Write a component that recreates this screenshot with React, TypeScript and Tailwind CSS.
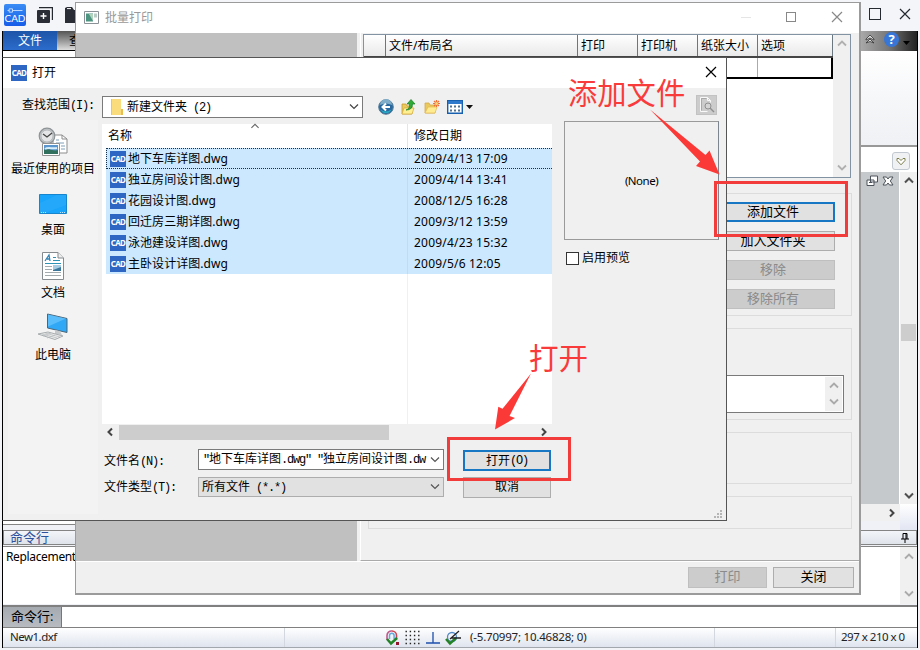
import type { ReactNode } from 'react';
import clsx from 'clsx';

const files = [
    { name: '地下车库详图.dwg', date: '2009/4/13 17:09' },
    { name: '独立房间设计图.dwg', date: '2009/4/14 13:41' },
    { name: '花园设计图.dwg', date: '2008/12/5 16:28' },
    { name: '回迁房三期详图.dwg', date: '2009/3/12 13:59' },
    { name: '泳池建设详图.dwg', date: '2009/4/23 15:32' },
    { name: '主卧设计详图.dwg', date: '2009/5/6 12:05' },
];

interface ChevronProps {
    dir: 'up' | 'down' | 'left' | 'right';
    className?: string;
    width?: number;
}

const chevronPaths = {
    up: 'M1 6.5 5 2.5 9 6.5',
    down: 'M1 2.5 5 6.5 9 2.5',
    left: 'M7 1.5 3.5 5 7 8.5',
    right: 'M3 1.5 6.5 5 3 8.5',
};

function Chevron({ dir, className, width = 1.2 }: ChevronProps) {
    return (
        <svg viewBox="0 0 10 10" className={clsx('size-[10px] shrink-0', className)} fill="none" stroke="currentColor" strokeWidth={width}>
            <path d={chevronPaths[dir]} />
        </svg>
    );
}

// Half-width latin, two characters per CJK cell
function Mono({ children }: { children: ReactNode }) {
    return <span className="font-['Liberation_Mono',monospace] tracking-[-1.2px] whitespace-pre">{children}</span>;
}

function CadIcon() {
    return (
        <span className="flex h-4 w-4 shrink-0 items-center justify-center bg-[#2e66c4] text-[8px] leading-none font-bold tracking-[-0.6px] text-white">
            CAD
        </span>
    );
}

function CloseIcon({ className }: { className?: string }) {
    return (
        <svg viewBox="0 0 12 12" className={clsx('size-3 shrink-0', className)} fill="none" stroke="currentColor" strokeWidth="1.2">
            <path d="M1 1 11 11M11 1 1 11" />
        </svg>
    );
}

function MainTitleBar() {
    return (
        <div className="flex h-[31px] shrink-0 items-start bg-[#f3f5f8]">
            <div className="mt-1 ml-1 flex h-[22px] w-[22px] flex-col items-center justify-end rounded-[2px] bg-gradient-to-b from-[#3a8cf5] to-[#175ce8] pb-[3px] text-white">
                <svg viewBox="0 0 20 6" className="h-[5px] w-5" fill="none" stroke="#d5e8ff">
                    <path d="M1 3h2M7 3h12M3 1h4v4H3z" />
                </svg>
                <span className="font-['Lato',sans-serif] text-[10px] leading-[10px] tracking-[-0.1px]">CAD</span>
            </div>
            <svg viewBox="0 0 17 17" className="mt-[7px] ml-[10px] size-[17px]">
                <path d="M3 .6h13.4V13" fill="none" stroke="#25282e" strokeWidth="1.2" />
                <rect x="1" y="3" width="13" height="13" rx="1" fill="#2a2d35" />
                <path d="M7.5 6v6M4.5 9h6" stroke="#fff" strokeWidth="1.4" />
            </svg>
            <svg viewBox="0 0 16 17" className="mt-[6px] ml-3 h-[17px] w-4">
                <path d="M0 2 2 1h5l2 3h7v13H0z" fill="#2a2d35" />
                <path d="M2 2.6h4" stroke="#fff" />
            </svg>
            <div className="mt-2 ml-auto flex items-center gap-[18px] pr-[9px] text-[#252a31]">
                <span className="h-3 w-3 border-[1.5px] border-current" />
                <CloseIcon />
            </div>
        </div>
    );
}

function Ribbon() {
    return (
        <>
            <div className="flex h-[20px] shrink-0 bg-gradient-to-b from-[#1c1c1c] to-black">
                <div className="flex h-[19px] w-[54px] items-center justify-center bg-gradient-to-b from-[#1d55a8] to-[#2c6ccc] text-white">文件</div>
                <div className="flex h-[19px] w-10 items-center bg-gradient-to-b from-[#555] to-[#ddd] pl-3 text-black">查看</div>
                <div className="ml-auto flex w-[57px] items-center bg-gradient-to-r from-[#aaa] via-[#777] to-[#222] pl-[5px]">
                    <svg viewBox="0 0 10 10" className="mb-1 size-[10px]" fill="#ddd" stroke="#333" strokeWidth=".8">
                        <path d="M1 5 5 1 9 5V6L5 4 1 6zM1 9 5 5 9 9 5 7.500z" />
                    </svg>
                    <span className="mb-[3px] ml-[9px] flex size-[15px] items-center justify-center rounded-full bg-[#3776d6] text-[13px] leading-none font-bold text-white">
                        ?
                    </span>
                    <svg viewBox="0 0 7 4" className="mt-1 ml-[4px] h-1 w-[7px]">
                        <path d="M0 0h7L3.5 4z" fill="#000" />
                    </svg>
                </div>
            </div>
            <div className="h-[96px] shrink-0 border-b-2 border-[#989898] bg-gradient-to-b from-white via-[#f6f7f9] to-[#eff1f4]" />
            <div className="flex h-[25px] shrink-0 items-start justify-end bg-white pt-[5px] pr-[7px]">
                <span className="flex h-[18px] w-[18px] items-center justify-center rounded-[3px] border border-[#c2c8d0] bg-[#f0f1f3]">
                    <svg viewBox="0 0 10 9" className="h-[9px] w-[10px]" fill="#fff" stroke="#7b7c48">
                        <path d="M1 3.5V1.5h2l2 2 2-2h2v2L5 7.8z" />
                    </svg>
                </span>
            </div>
        </>
    );
}

function Canvas() {
    return (
        <div className="flex h-[358px] shrink-0">
            <div className="mb-[5px] grow border-b border-[#848484] bg-white" />
            <div className="flex w-10 flex-col">
                <div className="flex h-[332px] items-start gap-[4px] border-r border-white bg-[#c5c9cc] pt-[3px] pl-[6px]">
                    <svg viewBox="0 0 12 12" className="size-3" fill="#fff" stroke="#4c535a">
                        <path d="M4.5 1h7v6h-7zM1 5h7v5.5H1z" />
                        <path d="M3 7.5h3" />
                    </svg>
                    <svg viewBox="0 0 12 12" className="size-3" fill="#fff" stroke="#4c535a">
                        <path d="M1 2h3.5L6 4l1.500-2H11L8.300 6 11 10H7.500L6 8l-1.500 2H1L3.700 6z" />
                    </svg>
                </div>
                <div className="flex h-[17px] items-center justify-end bg-[#f0f0f0] pr-[3px] text-[#444]">
                    <Chevron dir="right" width={2} />
                </div>
            </div>
            <div className="flex w-[17px] flex-col items-center bg-[#f0f0f0] pt-[4px] text-[#505050]">
                <Chevron dir="up" width={2} />
                <div className="mt-[138px] h-[17px] w-[15px] shrink-0 bg-[#cdcdcd]" />
                <Chevron dir="down" width={2} className="mt-[150px]" />
                <div className="mt-auto h-[26px] w-full bg-gradient-to-b from-white to-[#e2e5f3]" />
            </div>
        </div>
    );
}

function CommandPane() {
    return (
        <>
            <div className="flex h-[15px] shrink-0 items-center justify-between border border-[#848484] bg-gradient-to-b from-[#f3f5f9] to-[#dfe3ea] pr-[7px] pl-[6px] text-[13px] leading-none text-[#2c519d]">
                命令行
                <svg viewBox="0 0 8 10" className="h-[10px] w-2" fill="none" stroke="#000">
                    <path d="M2 6V.5h4V6M0 6h8M4 6v4M5 1v5" />
                </svg>
            </div>
            <div className="mt-[1px] flex h-[58px] shrink-0 justify-between border-t border-[#848484] bg-white">
                <span className="pt-[2px] pl-[3px] text-[12px] leading-4 tracking-[-0.35px] text-black">Replacement</span>
                <div className="flex w-[17px] flex-col items-center justify-between bg-[#f0f0f0] py-[5px] text-[#aaa]">
                    <Chevron dir="up" width={1.8} />
                    <Chevron dir="down" width={1.8} />
                </div>
            </div>
            <div className="mt-[1px] flex h-[23px] shrink-0 border-t-2 border-b border-[#808080] bg-white">
                <div className="flex w-[59px] items-center border-r border-[#777] bg-gradient-to-b from-[#a5aab1] to-[#b8bcc1] pl-2 text-[13px] text-black">
                    命令行:
                </div>
            </div>
        </>
    );
}

function StatusBar() {
    return (
        <div className="flex h-[20px] shrink-0 items-center border-b border-[#a2a6ad] bg-gradient-to-b from-white to-[#dfe4ee] text-[11.5px] leading-none text-[#222]">
            <span className="flex h-full w-[282px] items-center border-r border-[#d3d7df] pb-px pl-[7px] tracking-[-0.5px]">New1.dxf</span>
            <div className="flex h-full w-[430px] items-center border-r border-[#d3d7df] pl-[100px]">
                <svg viewBox="0 0 15 16" className="h-4 w-[15px]" fill="none">
                    <path d="M2 10V5.500a4.500 4.500 0 0 1 5-4.500" stroke="#c05a8a" strokeWidth="1.600" />
                    <path d="M7 1a4.500 4.500 0 0 1 4.500 4.500V9" stroke="#d2454f" strokeWidth="1.600" />
                    <path d="M4.500 9V5.500a2.300 2.300 0 0 1 4.600 0V9" stroke="#65a9dc" strokeWidth="1.500" />
                    <path d="m2 9 4 4.500L12 8" stroke="#218326" strokeWidth="2.500" />
                    <path d="M11 12h3v3h-3z" fill="#921629" />
                </svg>
                <svg viewBox="0 0 15 15" className="ml-[5px] size-[15px]" stroke="#222" strokeWidth="1.4" strokeDasharray="1.4 2.8">
                    <path d="M.5 1.500h14.500M.5 5.500h14.500M.5 9.500h14.500M.5 13.500h14.500" />
                </svg>
                <svg viewBox="0 0 14 14" className="ml-[6px] size-[14px]" stroke="#1d4fac" strokeWidth="1.3">
                    <path d="M7 1v11M0 12h14" />
                </svg>
                <svg viewBox="0 0 16 16" className="ml-[5px] size-4" fill="none">
                    <circle cx="7" cy="7" r="4.500" stroke="#5188c6" strokeWidth="1.300" />
                    <path d="m1 9 4 4.500 6-5.500" stroke="#248225" strokeWidth="2.500" />
                    <path d="M5 9 14 1M6 8h10" stroke="#222" strokeWidth="1.300" />
                </svg>
                <span className="ml-[9px] pb-px tracking-[-0.2px] whitespace-nowrap">(-5.70997; 10.46828; 0)</span>
            </div>
            <span className="flex h-full w-[121px] border-r border-[#d3d7df]" />
            <span className="pb-px pl-[5px] tracking-[-0.5px] whitespace-nowrap">297 x 210 x 0</span>
        </div>
    );
}

function MainWindow() {
    return (
        <div className="flex h-[650px] w-[920px] flex-col">
            <MainTitleBar />
            <div className="mr-[2px] ml-[2px] flex h-[617px] shrink-0 flex-col border-r border-l border-black bg-[#eff1f6]">
                <Ribbon />
                <Canvas />
                <CommandPane />
                <StatusBar />
            </div>
        </div>
    );
}

interface DialogButtonProps {
    children: ReactNode;
    className?: string;
    disabled?: boolean;
    focused?: boolean;
}

function DialogButton({ children, className, disabled, focused }: DialogButtonProps) {
    return (
        <button
            type="button"
            disabled={disabled}
            className={clsx(
                'flex shrink-0 items-center justify-center leading-none',
                disabled && 'border border-[#bfbfbf] bg-[#cccccc] text-[#8a8a8a]',
                focused && 'border-2 border-[#1877c5] bg-[#e1e1e1] text-black',
                !disabled && !focused && 'border border-[#adadad] bg-[#e1e1e1] text-black',
                className,
            )}
        >
            {children}
        </button>
    );
}

function FileTable() {
    return (
        <div className="flex h-[144px] w-[488px] border border-[#8294a4] bg-white">
            <div className="flex w-[469px] flex-col">
                <div className="flex h-[23px] border-b-2 border-[#444] bg-gradient-to-b from-white to-[#e9e9e9] text-[12px] text-black">
                    <span className="w-[22px] border-r border-[#6a7680]" />
                    <span className="flex w-[192px] items-center border-r border-[#6a7680] pl-[3px]">文件/布局名</span>
                    <span className="flex w-[60px] items-center border-r border-[#6a7680] pl-[3px]">打印</span>
                    <span className="flex w-[60px] items-center border-r border-[#6a7680] pl-[3px]">打印机</span>
                    <span className="flex w-[60px] items-center border-r border-[#6a7680] pl-[3px]">纸张大小</span>
                    <span className="flex grow items-center border-r border-[#6a7680] pl-[3px]">选项</span>
                </div>
                <div className="flex h-[21px] border-2 border-t-0 border-black">
                    <span className="w-[392px] border-r border-[#aaa]" />
                </div>
            </div>
            <div className="flex grow flex-col items-center justify-between bg-[#f0f0f0] pt-1 pb-1 text-[#b0b0b0]">
                <Chevron dir="up" width={1.8} />
                <Chevron dir="down" width={1.8} />
            </div>
        </div>
    );
}

function PrintDialog() {
    return (
        <div className="absolute top-[2px] left-[75px] flex h-[593px] w-[786px] flex-col border border-r-2 border-b-2 border-[#9b9b9b] bg-[#f0f0f0]">
            <div className="flex h-[30px] shrink-0 items-center bg-white pr-[16px] pl-2 text-[#999]">
                <svg viewBox="0 0 15 13" className="mb-[2px] h-[13px] w-[15px]">
                    <path d="M.5.5h14v12H.500z" fill="#fff" stroke="#8a9298" />
                    <path d="M2 2.500h7v8H2z" fill="#4c9380" />
                    <path d="M10 2.500h3v4h-3z" fill="#b9cbc5" />
                    <path d="M5 3h4v7z" fill="#b1d5bc" />
                </svg>
                <span className="ml-[6px] text-[12px]">批量打印</span>
                <div className="mb-[2px] ml-auto flex items-center">
                    <span className="h-px w-[10px] bg-[#e5e5e5]" />
                    <span className="ml-[35px] h-[10px] w-[10px] border border-[#888]" />
                    <CloseIcon className="ml-[35px] text-[#888]" />
                </div>
            </div>
            <div className="flex h-[528px] shrink-0">
                <div className="w-[281px] shrink-0 bg-[#c0c0c0]" />
                <div className="ml-[3px] flex grow flex-col border-b border-l border-b-[#aaa] border-l-white pt-px pl-[2px]">
                    <FileTable />
                    <div className="mt-[15px] ml-[5px] flex h-[123px] w-[484px] flex-col items-end gap-[9px] border border-[#dcdcdc] pt-[8px] pr-[16px] text-[13px]">
                        <DialogButton focused className="h-[20px] w-[124px] pb-[2px]">添加文件</DialogButton>
                        <DialogButton className="h-[20px] w-[124px] pb-[2px]">加入文件夹</DialogButton>
                        <DialogButton disabled className="h-[20px] w-[124px] pb-[2px]">移除</DialogButton>
                        <DialogButton disabled className="h-[20px] w-[124px] pb-[2px]">移除所有</DialogButton>
                    </div>
                    <div className="mt-[12px] ml-[5px] flex h-[92px] w-[484px] justify-end border border-[#dcdcdc] pt-[46px] pr-[7px]">
                        <div className="flex h-[38px] w-[300px] justify-end border border-[#7a7a7a] bg-white">
                            <div className="my-px mr-px flex w-[17px] flex-col items-center justify-between bg-[#f0f0f0] py-1 text-[#aaa]">
                                <Chevron dir="up" width={1.8} />
                                <Chevron dir="down" width={1.8} />
                            </div>
                        </div>
                    </div>
                    <div className="mt-[12px] ml-[5px] h-[52px] w-[484px] border border-[#dcdcdc]" />
                    <div className="mt-[12px] ml-[5px] h-[33px] w-[484px] border border-[#dcdcdc]" />
                </div>
            </div>
            <div className="flex grow justify-end gap-[6px] border-t border-white pt-[5px] pr-[5px] text-[13px]">
                <DialogButton disabled className="h-[21px] w-[79px] pb-[2px]">打印</DialogButton>
                <DialogButton className="h-[21px] w-[81px] pb-[2px]">关闭</DialogButton>
            </div>
        </div>
    );
}

function RecentIcon() {
    return (
        <svg viewBox="0 0 30 30" className="h-[30px] w-[30px]">
            <path d="M15 8h9l5 4v14H15z" fill="#fff" stroke="#8d8d8d" />
            <path d="M24 8v4h5" fill="none" stroke="#8d8d8d" />
            <path d="M18 13h3M18 16h8M23 19h4M23 22h4" stroke="#7fa0b8" />
            <circle cx="9" cy="9" r="7.800" fill="#c3c6c8" stroke="#8d9396" strokeWidth="1.200" />
            <circle cx="9" cy="9" r="6" fill="#e3e5e6" stroke="#a5abae" strokeWidth=".7" />
            <path d="m5 7 4 3 5-4" fill="none" stroke="#444" strokeWidth="1.300" />
            <path d="M4.500 16.500h17v12h-17z" fill="#fff" stroke="#929292" />
            <path d="M6 18h14v9H6z" fill="#5b96cf" />
            <path d="M6 23c4-3 9 2 14 0v4H6z" fill="#32705e" />
            <path d="M7 22c3-2 7 0 12-1" stroke="#d8eef8" strokeWidth="2" fill="none" />
        </svg>
    );
}

function DesktopIcon() {
    return (
        <svg viewBox="0 0 28 20" className="mb-1 h-5 w-7">
            <path d="M.5.5h27v19H.500z" fill="#18a4fa" stroke="#1685ce" />
            <path d="M18 1h9v10L6 19H1V9z" fill="#46b6fb" opacity=".25" />
            <path d="M2 18.500h5M21 18.500h5" stroke="#b8e8ff" strokeDasharray="1 1" />
        </svg>
    );
}

function DocumentsIcon() {
    return (
        <svg viewBox="0 0 22 28" className="mb-px h-7 w-[22px]">
            <path d="M.5.5H16L21.500 6v21.500H.500z" fill="#fff" stroke="#858b8e" />
            <path d="M16 .5V6h5.500" fill="#eee" stroke="#858b8e" />
            <path d="m3 9 4-6 1 6M5 7h3" fill="none" stroke="#3184b6" strokeWidth="1.300" />
            <path d="M11 5.500h3M11 8.500h7M3 11.500h16" stroke="#2d93b6" />
            <path d="M3 14.500h7M3 17.500h7M3 20.500h16M3 23.500h16" stroke="#a3abae" />
            <path d="M11 13h8v6h-8z" fill="#397699" />
            <path d="M11 13h8v2l-8 3z" fill="#a5cce3" />
        </svg>
    );
}

function ComputerIcon() {
    return (
        <svg viewBox="0 0 32 28" className="mb-[2px] h-7 w-8">
            <path d="M10.500 1 30 5.500v14L10.500 15z" fill="#31a8f5" stroke="#4b6678" />
            <path d="m11 1.500 18 4-18 8z" fill="#75cbff" opacity=".6" />
            <path d="m18 17 5 1 2 4-7-1z" fill="#c6c9cb" />
            <path d="m1 21 10-2 15 4-8 3.500z" fill="#eee" stroke="#a8acae" />
            <path d="m5 21 15 4M8 20l15 4M6 23l8-3M10 25l8-3" stroke="#b5b9bb" strokeWidth=".7" />
        </svg>
    );
}

const places = [
    { label: '最近使用的项目', icon: <RecentIcon />, box: 'h-[59px]' },
    { label: '桌面', icon: <DesktopIcon />, box: 'h-[61px]' },
    { label: '文档', icon: <DocumentsIcon />, box: 'h-[63px]' },
    { label: '此电脑', icon: <ComputerIcon />, box: 'h-[62px]' },
];

function Toolbar() {
    return (
        <div className="flex h-[36px] items-center">
            <span className="w-[99px] pb-px pl-[19px]">
                查找范围<Mono>(I):</Mono>
            </span>
            <div className="mt-[2px] flex h-[22px] w-[261px] items-center border border-[#7a7a7a] bg-white pr-[3px] pl-[7px]">
                <svg viewBox="0 0 14 16" className="h-4 w-[14px]">
                    <path d="M1 0h10v10l2 1v5H1z" fill="#fbdc7c" />
                    <path d="M11 10h2v6h-2z" fill="#e8bd52" />
                    <path d="M1 0h1v16H1z" fill="#edc65f" />
                </svg>
                <span className="ml-[3px]">
                    新建文件夹<Mono> (2)</Mono>
                </span>
                <Chevron dir="down" className="ml-auto text-[#444]" />
            </div>
            <div className="mt-[2px] ml-[15px] flex items-center">
                <svg viewBox="0 0 16 16" className="size-4">
                    <circle cx="8" cy="8" r="7.300" fill="#2868a1" stroke="#597e97" />
                    <path d="M2 6a6 6 0 0 1 12 0q-6-3-12 0" fill="#80aeca" />
                    <path d="M2.500 10.500q5 4 11 0A6 6 0 0 1 2.500 10.500" fill="#28a8c2" />
                    <path d="M12 8H4.500M8 4.500 4.500 8 8 11.500" fill="none" stroke="#fff" strokeWidth="2" />
                </svg>
                <svg viewBox="0 0 16 16" className="ml-[7px] size-4">
                    <path d="M1 5h4l1 2h5v8H1z" fill="#eac95d" stroke="#c99b2e" strokeWidth=".8" />
                    <path d="m1 15 2-6h10l-2 6z" fill="#ffef93" stroke="#d4aa3d" strokeWidth=".7" />
                    <path d="M5 11q4-1 3.500-6H6l4-4.500L14 5h-2.500q0 6-6.500 6z" fill="#30ac36" stroke="#197c2a" strokeWidth=".7" />
                </svg>
                <svg viewBox="0 0 16 16" className="ml-[7px] size-4">
                    <path d="M1 4h4l1 2h5v8H1z" fill="#eac95d" stroke="#d5a94d" strokeWidth=".8" />
                    <path d="m1 14 3-6h9l-2 6z" fill="#ffec91" stroke="#e3b851" strokeWidth=".7" />
                    <path d="M12.500 1v7M9 4.500h7M10 2l5 5M15 2l-5 5" stroke="#ef7137" strokeWidth="1.200" />
                    <circle cx="12.500" cy="4.500" r="1.500" fill="#ffd66d" />
                </svg>
                <svg viewBox="0 0 16 14" className="ml-[7px] h-[14px] w-4">
                    <path d="M.7.7h14.600v12.600H.700z" fill="#fff" stroke="#1760b0" strokeWidth="1.400" />
                    <path d="M1 1h14v3H1z" fill="#2e79cc" />
                    <path d="M3 6.500h10M3 10.500h10" stroke="#54728d" strokeWidth="2" strokeDasharray="2 2" />
                </svg>
                <svg viewBox="0 0 7 4" className="ml-[3px] h-1 w-[7px]">
                    <path d="M0 0h7L3.500 4z" fill="#111" />
                </svg>
            </div>
            <span className="mr-[9px] mb-[3px] ml-auto flex h-[20px] w-[21px] items-center justify-center border border-[#c2c2c2] bg-[#cccccc]">
                <svg viewBox="0 0 17 17" className="size-[17px]" fill="none" stroke="#fff">
                    <path d="M2.500 15.500v-14h7l3 3v2M9.500 1.500v3h3M2.500 15.500h7" stroke="#f8f8f8" />
                    <path d="M3.500 14.500v-12h5" stroke="#999" strokeWidth=".7" />
                    <circle cx="10" cy="10" r="3" fill="#d4d4d4" stroke="#8f8f8f" />
                    <path d="m12 12 4 4" stroke="#8f8f8f" strokeWidth="1.500" />
                </svg>
            </span>
        </div>
    );
}

function FileList() {
    return (
        <div className="flex h-[316px] w-[450px] flex-col bg-white">
            <div className="flex h-[24px] shrink-0">
                <div className="flex w-[306px] flex-col border-r border-[#e5e5e5] pl-[6px]">
                    <Chevron dir="up" className="-mt-[2px] -mb-[5px] ml-[142px] h-[9px] text-[#666]" />
                    <span className="leading-[20px]">名称</span>
                </div>
                <span className="pt-[2px] pl-[6px] leading-5">修改日期</span>
            </div>
            <div className="flex flex-col pl-1">
                {files.map((file, i) => (
                    <div
                        key={file.name}
                        className={clsx(
                            'flex items-center bg-[#cce8ff]',
                            i === 0 ? 'h-[21px] border-y border-l border-dotted border-[#16304a]' : 'h-[21px] pl-px',
                        )}
                    >
                        <div className="flex h-full w-[301px] items-center border-r border-solid border-[#bbdef8] pl-[3px]">
                            <CadIcon />
                            <span className="ml-[2px] tracking-[0.05px]">{file.name}</span>
                        </div>
                        <span className="pl-[6px] tracking-[0.2px]">{file.date}</span>
                    </div>
                ))}
            </div>
            <div className="w-[306px] grow border-r border-[#f0f0f0]" />
            <div className="flex h-[16px] shrink-0 items-center bg-[#f0f0f0] text-[#444]">
                <Chevron dir="left" width={2} className="ml-[3px]" />
                <div className="ml-[4px] h-[15px] w-[270px] bg-[#cdcdcd]" />
                <Chevron dir="right" width={2} className="mr-[3px] ml-auto" />
            </div>
        </div>
    );
}

function FileFields() {
    return (
        <div className="flex items-start pt-[9px]">
            <div className="flex w-[96px] flex-col gap-[5px] pt-[2px] pl-[2px]">
                <span className="leading-5">
                    文件名<Mono>(N):</Mono>
                </span>
                <span className="leading-5">
                    文件类型<Mono>(T):</Mono>
                </span>
            </div>
            <div className="flex w-[246px] flex-col gap-[7px]">
                <div className="flex h-[21px] items-center border border-[#7a7a7a] bg-white pr-[3px] pl-[4px] whitespace-nowrap">
                    <span className="w-[222px]">
                        <Mono>"</Mono>地下车库详图<Mono>.dwg"</Mono>
                        <span className="tracking-[-1.2px]">
                            <Mono> "</Mono>
                        </span>
                        独立房间设计图<Mono>.dw</Mono>
                    </span>
                    <Chevron dir="down" className="ml-auto text-[#555]" />
                </div>
                <div className="flex h-[20px] items-center border border-[#adadad] bg-[#e1e1e1] pr-[3px] pl-[3px]">
                    <span>
                        所有文件<Mono> (*.*)</Mono>
                    </span>
                    <Chevron dir="down" className="ml-auto text-[#555]" />
                </div>
            </div>
            <div className="ml-[19px] flex w-[88px] flex-col gap-[6px] pt-px">
                <DialogButton focused className="h-[21px]">
                    打开<Mono>(O)</Mono>
                </DialogButton>
                <DialogButton className="h-[21px] pb-px">取消</DialogButton>
            </div>
        </div>
    );
}

function OpenDialog() {
    return (
        <div className="absolute top-[57px] left-[2px] flex h-[464px] w-[725px] flex-col border border-[#555] border-l-black bg-[#f0f0f0] text-[12px] text-black">
            <div className="flex h-[30px] shrink-0 items-center bg-white pr-[9px] pl-2">
                <CadIcon />
                <span className="ml-[5px]">打开</span>
                <CloseIcon className="mb-[2px] ml-auto" />
            </div>
            <Toolbar />
            <div className="flex">
                <div className="-mt-[4px] mr-[4px] ml-[5px] flex h-[394px] w-[90px] flex-col items-center bg-[#f3f3f3] pt-[2px]">
                    {places.map((place) => (
                        <div key={place.label} className={clsx('flex w-full shrink-0 flex-col items-center justify-end whitespace-nowrap', place.box)}>
                            {place.icon}
                            <span className="leading-[24px]">{place.label}</span>
                        </div>
                    ))}
                </div>
                <div className="w-[450px]">
                    <FileList />
                    <FileFields />
                </div>
                <div className="-mt-[3px] ml-[12px] flex w-[155px] flex-col">
                    <div className="flex h-[119px] items-center justify-center border border-[#9a9a9a] border-r-[#7d8590] text-[11.5px] tracking-[-0.5px]">(None)</div>
                    <label className="mt-[10px] ml-[2px] flex items-center gap-[3px] leading-[16px]">
                        <span className="size-[13px] border border-[#333] bg-white" />
                        启用预览
                    </label>
                    <svg viewBox="0 0 9 9" className="mt-[244px] ml-[150px] size-[9px]" fill="#b5b5b5">
                        <path d="M6 0h2v2H6zM3 3h2v2H3zM6 3h2v2H6zM0 6h2v2H0zM3 6h2v2H3zM6 6h2v2H6z" />
                    </svg>
                </div>
            </div>
        </div>
    );
}

function Annotations() {
    return (
        <>
            <div className="absolute top-[181px] left-[714px] h-[56px] w-[134px] border-[3px] border-[#f23b3b]" />
            <div className="absolute top-[437px] left-[447px] h-[44px] w-[124px] border-[3px] border-[#f23b3b]" />
            <span className="absolute top-[76px] left-[568px] text-[29.3px] leading-[34px] whitespace-nowrap text-[#f93b3b]">添加文件</span>
            <span className="absolute top-[341px] left-[529px] text-[29.6px] leading-[34px] whitespace-nowrap text-[#f93b3b]">打开</span>
            <svg viewBox="0 0 920 650" className="pointer-events-none absolute inset-0 h-[650px] w-[920px]" fill="#fb3a38">
                <path d="M650 109.500 705.500 155 709.500 150.500 719.500 174.500 696 166 700 161.500z" />
                <path d="M531 373.500 509.500 416 515 418 495 429.500 498.300 406.700 502.500 408.700z" />
            </svg>
        </>
    );
}

export default function App() {
    return (
        <div className="relative h-[650px] w-[920px] overflow-hidden bg-[#f1f3f6] font-['Noto_Sans','Noto_Sans_CJK_SC',sans-serif] text-[12px]">
            <MainWindow />
            <PrintDialog />
            <OpenDialog />
            <Annotations />
        </div>
    );
}
